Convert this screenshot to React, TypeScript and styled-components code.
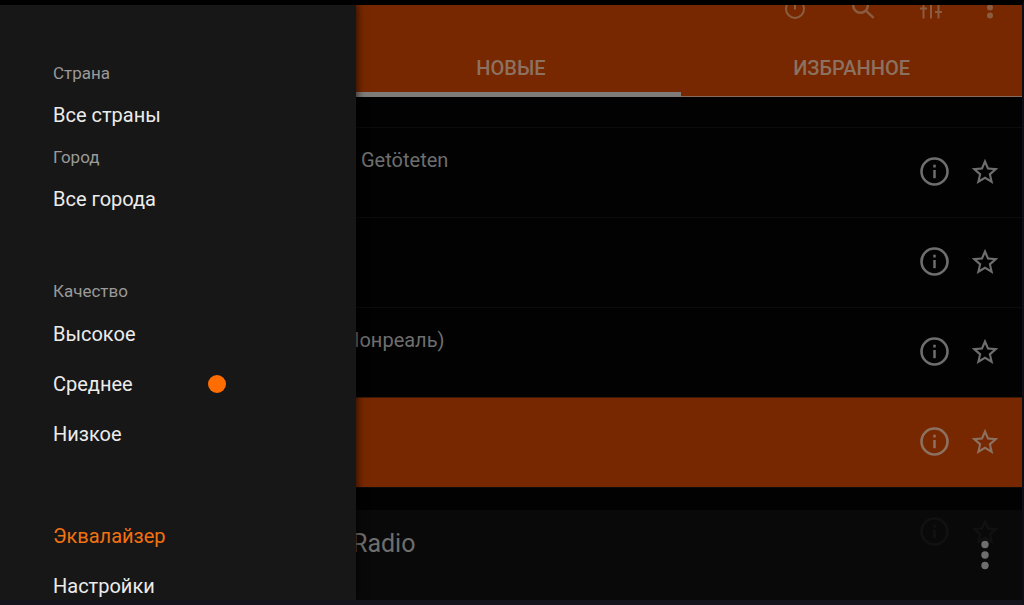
import React, { useState } from "react";
import styled, { createGlobalStyle } from "styled-components";

const color = {
  frame: "#14121a",
  drawer: "#171717",
  accent: "#ff6d00",
  bar: "#772800",
  muted: "#6e6e6e",
  onBar: "#8c7160",
  tool: "#8a5c40",
};

const GlobalStyle = createGlobalStyle`
  * { box-sizing: border-box; }
  body {
    margin: 0;
    background: #000;
    font-family: Roboto, "Liberation Sans", sans-serif;
  }
  button, select, input { font: inherit; color: inherit; margin: 0; }
`;

const Screen = styled.div`
  display: grid;
  grid-template-columns: minmax(0, 1fr);
  min-height: 100vh;
  border-style: solid;
  border-width: 5px 2px 5px 0;
  border-color: #000 #0f0e16 ${color.frame} #000;
`;

const Drawer = styled.aside`
  grid-area: 1 / 1;
  z-index: 2;
  justify-self: start;
  width: 356px;
  padding: 54px 52px 0 53px;
  background: ${color.drawer};
  box-shadow: 0 0 8px 1px rgba(0, 0, 0, 0.7);
  clip-path: inset(0 -16px 0 0);
  color: #ececec;
  font-size: 20px;
  line-height: 28px;
`;

const Group = styled.section`
  display: flex;
  flex-direction: column;
  gap: 14px;
  margin-bottom: 64px;
`;

const Caption = styled.label`
  color: #9a9a9a;
  font-size: 17px;
`;

const Picker = styled.select`
  appearance: none;
  height: 28px;
  padding: 0;
  border: 0;
  background: transparent;
  outline: 0;
`;

const Choices = styled.div`
  display: flex;
  flex-direction: column;
  gap: 22px;
  padding-top: 1px;
`;

const Choice = styled.label`
  display: grid;
  grid-template-columns: 155px 18px;
  align-items: center;
`;

const Dot = styled.input`
  appearance: none;
  width: 18px;
  height: 18px;
  border-radius: 50%;
  &:checked { background: ${color.accent}; }
`;

const Links = styled.nav`
  display: flex;
  flex-direction: column;
  gap: 22px;
  padding-top: 10px;
`;

const DrawerLink = styled.a<{ $active?: boolean }>`
  color: ${(p) => (p.$active ? "#f27111" : "inherit")};
  text-decoration: none;
`;

const Main = styled.main`
  grid-area: 1 / 1;
  display: grid;
  grid-template-columns: minmax(0, 1fr);
  background: #020202;
`;

const Page = styled.div`
  grid-area: 1 / 1;
`;

const Header = styled.header`
  background: ${color.bar};
  color: ${color.onBar};
`;

const Toolbar = styled.div`
  display: flex;
  justify-content: flex-end;
  align-items: flex-end;
  gap: 20px;
  height: 14px;
  margin-bottom: 18px;
  padding-right: 17px;
  overflow: hidden;
  color: ${color.tool};
`;

const IconButton = styled.button<{ $width: number }>`
  display: flex;
  flex: none;
  justify-content: center;
  align-items: center;
  width: ${(p) => p.$width}px;
  padding: 0;
  border: 0;
  background: transparent;
  svg { display: block; }
`;

const Tabs = styled.div`
  display: grid;
  grid-template-columns: repeat(3, 1fr);
  height: 60px;
  border-bottom: 1px solid #8a6a58;
`;

const Tab = styled.button<{ $column: number; $active?: boolean }>`
  grid-column: ${(p) => p.$column};
  height: 60px;
  padding: 6px 0 0;
  border: 0;
  border-bottom: 5px solid ${(p) => (p.$active ? "#7f7b79" : "transparent")};
  background: transparent;
  font-size: 20px;
  font-weight: 500;
`;

const Stations = styled.ul`
  margin: 0;
  padding: 30px 0 0;
  list-style: none;
`;

const Station = styled.li<{ $playing?: boolean }>`
  display: flex;
  justify-content: flex-end;
  height: 90px;
  padding: 0 12px 1px 0;
  border-top: 1px solid ${(p) => (p.$playing ? "#3c1a06" : "#0c0c0c")};
  background: ${(p) => (p.$playing ? color.bar : "transparent")};
  color: ${(p) => (p.$playing ? color.onBar : color.muted)};
`;

const StationText = styled.span<{ $start: number }>`
  flex: 1;
  padding: 18px 0 0 ${(p) => p.$start}px;
  font-size: 20px;
  line-height: 28px;
`;

const Player = styled.footer`
  grid-area: 1 / 1;
  z-index: 1;
  align-self: end;
  display: flex;
  justify-content: space-between;
  height: 90px;
  padding: 0 12px 0 352px;
  background: rgba(10, 10, 10, 0.93);
  color: ${color.muted};
`;

const PlayerTitle = styled.span`
  padding-top: 18px;
  font-size: 25px;
  line-height: 32px;
`;

const InfoIcon = () => (
  <svg width="30" height="30" viewBox="0 0 30 30" fill="none" stroke="currentColor">
    <circle cx="14.5" cy="14.5" r="13" strokeWidth="2.6" />
    <path d="M14.5 13v8.200" strokeWidth="2.5" />
    <path d="M14.5 7.700v2.800" strokeWidth="2.5" />
  </svg>
);

const StarIcon = () => (
  <svg width="32" height="32" viewBox="0 0 24 24" fill="currentColor">
    <path d="M22 9.24l-7.19-.62L12 2 9.19 8.63 2 9.24l5.46 4.73L5.82 21 12 17.27 18.18 21l-1.63-7.03L22 9.24zM12 15.4l-3.76 2.27 1-4.28-3.32-2.88 4.38-.38L12 6.1l1.71 4.04 4.38.38-3.32 2.88 1 4.28L12 15.4z" />
  </svg>
);

const TimerIcon = () => (
  <svg width="28" height="28" viewBox="0 0 28 28" fill="none" stroke="currentColor" strokeWidth="2">
    <path d="M7.6 11.6a9 9 0 1 0 12.8 0" />
    <path d="M14 9v9.500" />
  </svg>
);

const SearchIcon = () => (
  <svg width="28" height="28" viewBox="0 0 28 28" fill="none" stroke="currentColor" strokeWidth="2.5">
    <circle cx="11.5" cy="14.5" r="7.3" />
    <path d="M16.600 19.400l8 7.400" />
  </svg>
);

const MixerIcon = () => (
  <svg width="28" height="28" viewBox="0 0 28 28" fill="none" stroke="currentColor" strokeWidth="2">
    <path d="M6.500 6v21.500M14 6v21.500M21.500 6v21.500" />
    <path d="M3 17.500h7M18 21h7" strokeWidth="2.200" />
  </svg>
);

const MoreIcon = () => (
  <svg width="8" height="28" viewBox="0 0 8 28" fill="currentColor">
    <circle cx="4" cy="9" r="3" />
    <circle cx="4" cy="16.500" r="3" />
    <circle cx="4" cy="24.500" r="3" />
  </svg>
);

const PlayerMenuIcon = () => (
  <svg width="10" height="30" viewBox="0 0 10 30" fill="currentColor">
    <circle cx="5" cy="4.500" r="3.700" />
    <circle cx="5" cy="15" r="3.700" />
    <circle cx="5" cy="25.500" r="3.700" />
  </svg>
);

const stations = [
  { text: "Getöteten", start: 361 },
  { text: "", start: 0 },
  { text: "Монреаль)", start: 342 },
  { text: "", start: 0, playing: true },
  { text: "", start: 0 },
];

const qualities = ["Высокое", "Среднее", "Низкое"];

export default function App() {
  const [quality, setQuality] = useState("Среднее");

  return (
    <>
      <GlobalStyle />
      <Screen>
        <Drawer>
          <Group>
            <Caption htmlFor="country">Страна</Caption>
            <Picker id="country">
              <option>Все страны</option>
            </Picker>
            <Caption htmlFor="city">Город</Caption>
            <Picker id="city">
              <option>Все города</option>
            </Picker>
          </Group>
          <Group role="radiogroup" aria-labelledby="quality">
            <Caption as="span" id="quality">Качество</Caption>
            <Choices>
              {qualities.map((name) => (
                <Choice key={name}>
                  {name}
                  <Dot
                    type="radio"
                    name="quality"
                    checked={quality === name}
                    onChange={() => setQuality(name)}
                  />
                </Choice>
              ))}
            </Choices>
          </Group>
          <Links>
            <DrawerLink href="#equalizer" $active>Эквалайзер</DrawerLink>
            <DrawerLink href="#settings">Настройки</DrawerLink>
          </Links>
        </Drawer>
        <Main>
          <Page>
            <Header>
              <Toolbar>
                <IconButton $width={48}><TimerIcon /></IconButton>
                <IconButton $width={48}><SearchIcon /></IconButton>
                <IconButton $width={48}><MixerIcon /></IconButton>
                <IconButton $width={30}><MoreIcon /></IconButton>
              </Toolbar>
              <Tabs role="tablist">
                <Tab role="tab" $column={2} $active aria-selected>НОВЫЕ</Tab>
                <Tab role="tab" $column={3}>ИЗБРАННОЕ</Tab>
              </Tabs>
            </Header>
            <Stations>
              {stations.map((station, index) => (
                <Station key={index} $playing={station.playing}>
                  {station.text && (
                    <StationText $start={station.start}>{station.text}</StationText>
                  )}
                  <IconButton $width={50}><InfoIcon /></IconButton>
                  <IconButton $width={50}><StarIcon /></IconButton>
                </Station>
              ))}
            </Stations>
          </Page>
          <Player>
            <PlayerTitle>Radio</PlayerTitle>
            <IconButton $width={50}><PlayerMenuIcon /></IconButton>
          </Player>
        </Main>
      </Screen>
    </>
  );
}
